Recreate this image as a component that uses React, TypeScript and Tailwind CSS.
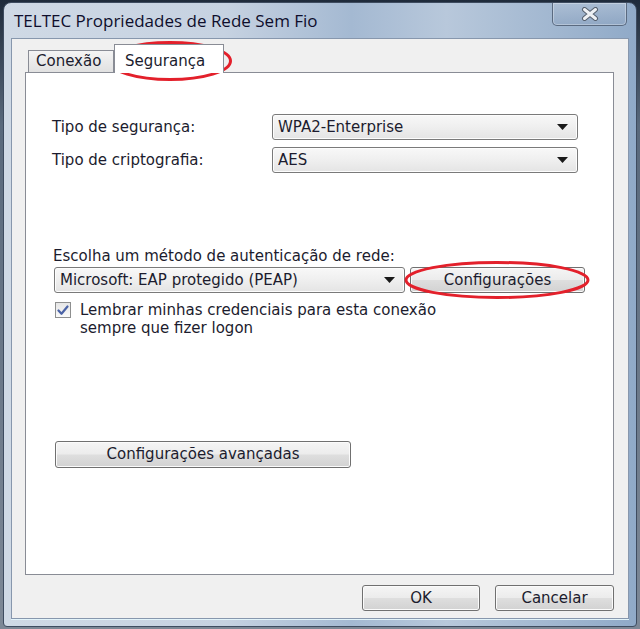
import React from "react";

const BTN =
  "flex items-center justify-center rounded-[3px] border border-[#707070] bg-[linear-gradient(to_bottom,#f5f5f5_0%,#ececec_48%,#dedede_52%,#d2d2d2_100%)] shadow-[inset_0_0_0_1px_#fbfbfb] text-[#1c1c2e]";

function Combo({ value, className }: { value: string; className?: string }) {
  return (
    <div
      className={`flex h-[26px] items-center justify-between rounded-[3px] border border-[#7a7a7a] bg-[linear-gradient(to_bottom,#f8f8f8_0%,#efefef_50%,#e4e4e4_100%)] pl-[5px] pr-[9px] shadow-[inset_0_0_0_1px_#fdfdfd] ${className ?? ""}`}
    >
      <span className="truncate">{value}</span>
      <svg width="11" height="6" viewBox="0 0 11 6" className="shrink-0">
        <path d="M0 0h11L5.5 6z" fill="#1a1a1a" />
      </svg>
    </div>
  );
}

function Checkbox() {
  return (
    <div className="mt-[1px] flex h-[16px] w-[16px] shrink-0 items-center justify-center border border-[#8e8f8f] bg-linear-to-b from-[#e6e6e6] to-[#fafafa]">
      <svg width="12" height="11" viewBox="0 0 12 11">
        <path
          d="M1.5 5.5 L4.5 8.8 L10.5 1.5"
          fill="none"
          stroke="#4b63a6"
          strokeWidth="2.2"
          strokeLinecap="round"
          strokeLinejoin="round"
        />
      </svg>
    </div>
  );
}

export default function App() {
  return (
    <div className="relative flex h-[629px] w-[640px] flex-col overflow-hidden bg-[linear-gradient(to_bottom,#1f2b3b,#59697c_20%,#7d8896)] px-[3px] pb-[2px] pt-[2px] font-['DejaVu_Sans',sans-serif] text-[15px] text-[#1c1c2e]">
      {/* window frame */}
      <div className="flex flex-1 flex-col rounded-t-[8px] rounded-b-[4px] border border-[#3e4c60] bg-[linear-gradient(to_right,#cfd9e5_0%,#c6d2e1_35%,#a4b9d2_55%,#b8c8db_70%,#90aac8_100%)]">
        {/* title bar */}
        <div className="flex h-[35px] items-start justify-between pl-[10px] pr-[9px]">
          <span className="pt-[6px] font-['Open_Sans',sans-serif] text-[17px] leading-[24px] text-[#0e0e2c]">
            TELTEC Propriedades de Rede Sem Fio
          </span>
          <div className="flex h-[23px] w-[75px] items-center justify-center rounded-b-[5px] border border-t-0 border-[#5a6a80] bg-linear-to-b from-[#b4c4d8]/60 to-[#8ca3c0]/60 shadow-[inset_0_0_0_1px_rgba(255,255,255,0.3)]">
            <svg width="18" height="14" viewBox="0 0 18 14">
              <path
                d="M3.5 2.5 L14.5 11.5 M14.5 2.5 L3.5 11.5"
                stroke="#56606e"
                strokeWidth="5"
                strokeLinecap="round"
              />
              <path
                d="M3.5 2.5 L14.5 11.5 M14.5 2.5 L3.5 11.5"
                stroke="#eef1f5"
                strokeWidth="3"
                strokeLinecap="round"
              />
            </svg>
          </div>
        </div>

        {/* client area */}
        <div className="mx-[7px] mb-[7px] flex flex-1 flex-col border border-[#8797ad] bg-[#f0f0f0] pb-[7px] pl-[13px] pr-[14px] pt-[5px] shadow-[0_1px_0_#e3f4fa]">
          {/* tabs */}
          <div className="relative z-10 flex h-[28px] items-end pl-[3px]">
            <div className="flex h-[22px] w-[86px] items-center overflow-hidden whitespace-nowrap border border-b-0 border-[#898c95] bg-linear-to-b from-[#f4f4f4] to-[#e1e1e1] pl-[7px]">
              Conexão
            </div>
            <div className="-mb-px flex h-[29px] w-[110px] items-start border border-b-0 border-[#898c95] bg-white pl-[10px] pt-[5px]">
              Segurança
            </div>
          </div>

          {/* tab panel */}
          <div className="flex flex-1 flex-col border border-[#898c95] bg-white pl-[26px] pt-[41px]">
            <div className="grid grid-cols-[220px_306px] items-center gap-y-[7px]">
              <span>Tipo de segurança:</span>
              <Combo value="WPA2-Enterprise" />
              <span>Tipo de criptografia:</span>
              <Combo value="AES" />
            </div>

            <div className="ml-[1px] mt-[73px] leading-[20px]">
              Escolha um método de autenticação de rede:
            </div>
            <div className="ml-[2px] mt-[1px] flex gap-[5px]">
              <Combo value="Microsoft: EAP protegido (PEAP)" className="w-[351px]" />
              <div className={`${BTN} h-[26px] w-[175px]`}>Configurações</div>
            </div>

            <div className="ml-[3px] mt-[8px] flex items-start gap-[9px] leading-[18px]">
              <Checkbox />
              <span>
                Lembrar minhas credenciais para esta conexão
                <br />
                sempre que fizer logon
              </span>
            </div>

            <div className={`${BTN} ml-[3px] mt-[104px] h-[27px] w-[296px]`}>
              Configurações avançadas
            </div>
          </div>

          {/* dialog buttons */}
          <div className="mt-[10px] flex justify-end gap-[15px]">
            <div className={`${BTN} h-[26px] w-[118px]`}>OK</div>
            <div className={`${BTN} h-[26px] w-[119px]`}>Cancelar</div>
          </div>
        </div>
      </div>

      {/* red highlight marks drawn over the screenshot */}
      <svg
        className="pointer-events-none absolute left-0 top-0"
        width="640"
        height="629"
        viewBox="0 0 640 629"
      >
        <ellipse cx="170" cy="61" rx="60.5" ry="18.5" fill="none" stroke="#e3202b" strokeWidth="3" />
        <ellipse cx="497" cy="280" rx="91" ry="17.5" fill="none" stroke="#e3202b" strokeWidth="3" />
      </svg>
    </div>
  );
}
